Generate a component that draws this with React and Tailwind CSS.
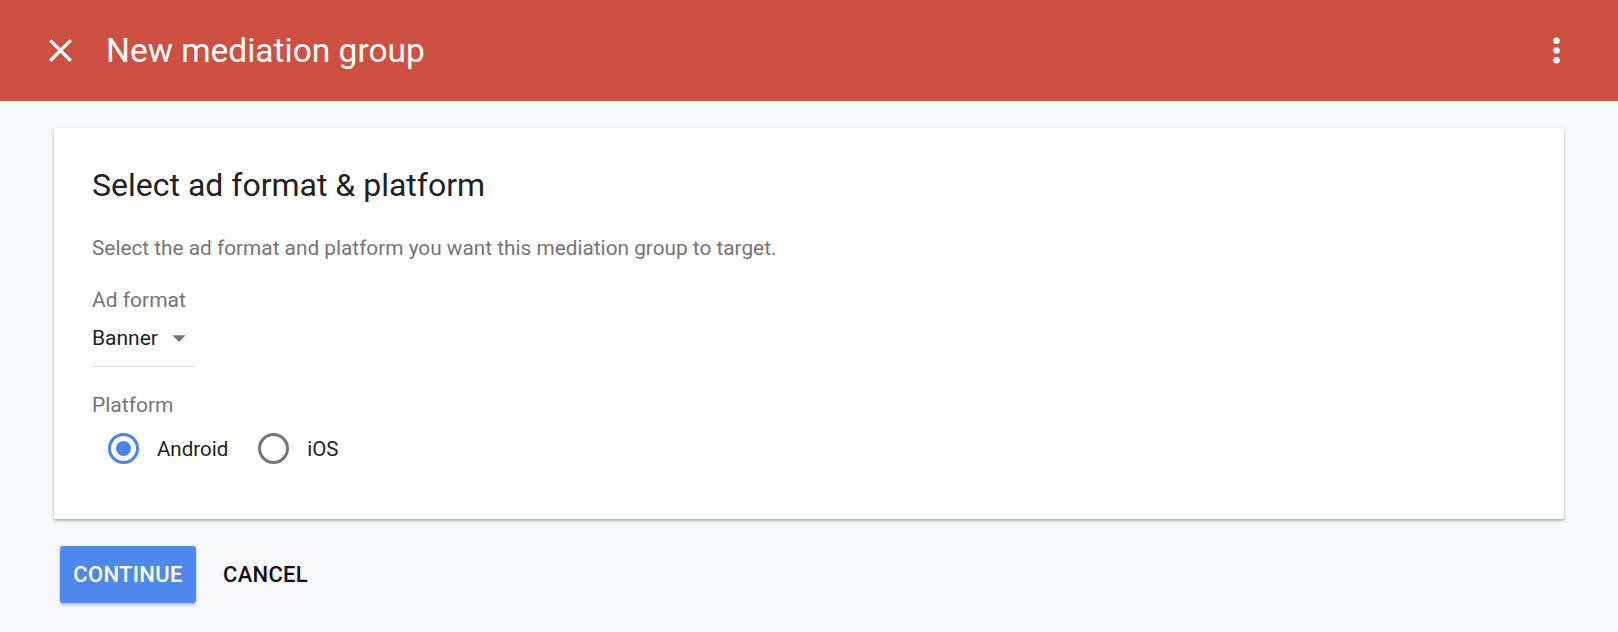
import React, { useState } from "react";

// Header icons — material paths, drawn at 39px
function CloseIcon() {
  return (
    <svg width="39" height="39" viewBox="0 0 24 24" fill="#ffffff">
      <path d="M19 6.41L17.59 5 12 10.59 6.41 5 5 6.41 10.59 12 5 17.59 6.41 19 12 13.41 17.59 19 19 17.59 13.41 12z" />
    </svg>
  );
}

function MoreVert() {
  return (
    <svg width="39" height="39" viewBox="0 0 24 24" fill="#ffffff">
      <circle cx="12" cy="6" r="2" />
      <circle cx="12" cy="12" r="2" />
      <circle cx="12" cy="18" r="2" />
    </svg>
  );
}

function Radio({ checked, label, onClick }) {
  return (
    <button type="button" onClick={onClick} className="flex items-center gap-[18px] outline-none">
      <span
        className={`w-[31px] h-[31px] rounded-full border-[3px] flex items-center justify-center ${
          checked ? "border-[#4a86e8]" : "border-[#757575]"
        }`}
      >
        {checked && <span className="w-[15px] h-[15px] rounded-full bg-[#4a86e8]" />}
      </span>
      <span className="text-[20.5px] leading-[28px] text-[#212121]">{label}</span>
    </button>
  );
}

export default function App() {
  const [platform, setPlatform] = useState("android");

  return (
    <div className="min-h-[632px] bg-[#f7f8fa] font-['Roboto',sans-serif]">
      {/* Top bar */}
      <div className="h-[101px] bg-[#cd5042] flex items-center pl-[41px] pr-[42px]">
        <CloseIcon />
        <h1 className="ml-[26px] text-[33.5px] font-normal text-white leading-none flex-1">
          New mediation group
        </h1>
        <MoreVert />
      </div>

      {/* Card */}
      <div className="mx-[54px] mt-[27px] bg-white rounded-[2px] shadow-[0_2px_3px_rgba(0,0,0,0.28),0_0_2px_rgba(0,0,0,0.1)] pl-[38px] pt-[37px] pb-[55px]">
        <h2 className="text-[32px] leading-[40px] text-[#202124] font-normal">
          Select ad format &amp; platform
        </h2>
        <p className="mt-[29px] text-[20.8px] leading-[28px] text-[#757575]">
          Select the ad format and platform you want this mediation group to target.
        </p>

        <p className="mt-[24px] text-[21px] leading-[28px] text-[#757575]">Ad format</p>
        <div className="mt-[10px] w-[103px] h-[43px] border-b-[1.5px] border-[#e0e0e0] flex items-start">
          <span className="text-[21px] leading-[28px] text-[#212121]">Banner</span>
          <svg className="ml-[5px] -mt-[3px]" width="34" height="34" viewBox="0 0 24 24" fill="#757575">
            <path d="M7 10l5 5 5-5z" />
          </svg>
        </div>

        <p className="mt-[24px] text-[21px] leading-[28px] text-[#757575]">Platform</p>
        <div className="mt-[14px] ml-[16px] flex items-center gap-[30px]">
          <Radio checked={platform === "android"} label="Android" onClick={() => setPlatform("android")} />
          <Radio checked={platform === "ios"} label="iOS" onClick={() => setPlatform("ios")} />
        </div>
      </div>

      {/* Actions */}
      <div className="mt-[27px] ml-[60px] flex items-center gap-[27px]">
        <button className="w-[136px] h-[57px] rounded-[3px] bg-[#4e88ea] text-white text-[22px] font-medium tracking-[0.3px] shadow-[0_2px_3px_rgba(0,0,0,0.25)]">
          CONTINUE
        </button>
        <button className="text-[22px] font-medium text-[#111] tracking-[0.3px]">CANCEL</button>
      </div>
    </div>
  );
}
